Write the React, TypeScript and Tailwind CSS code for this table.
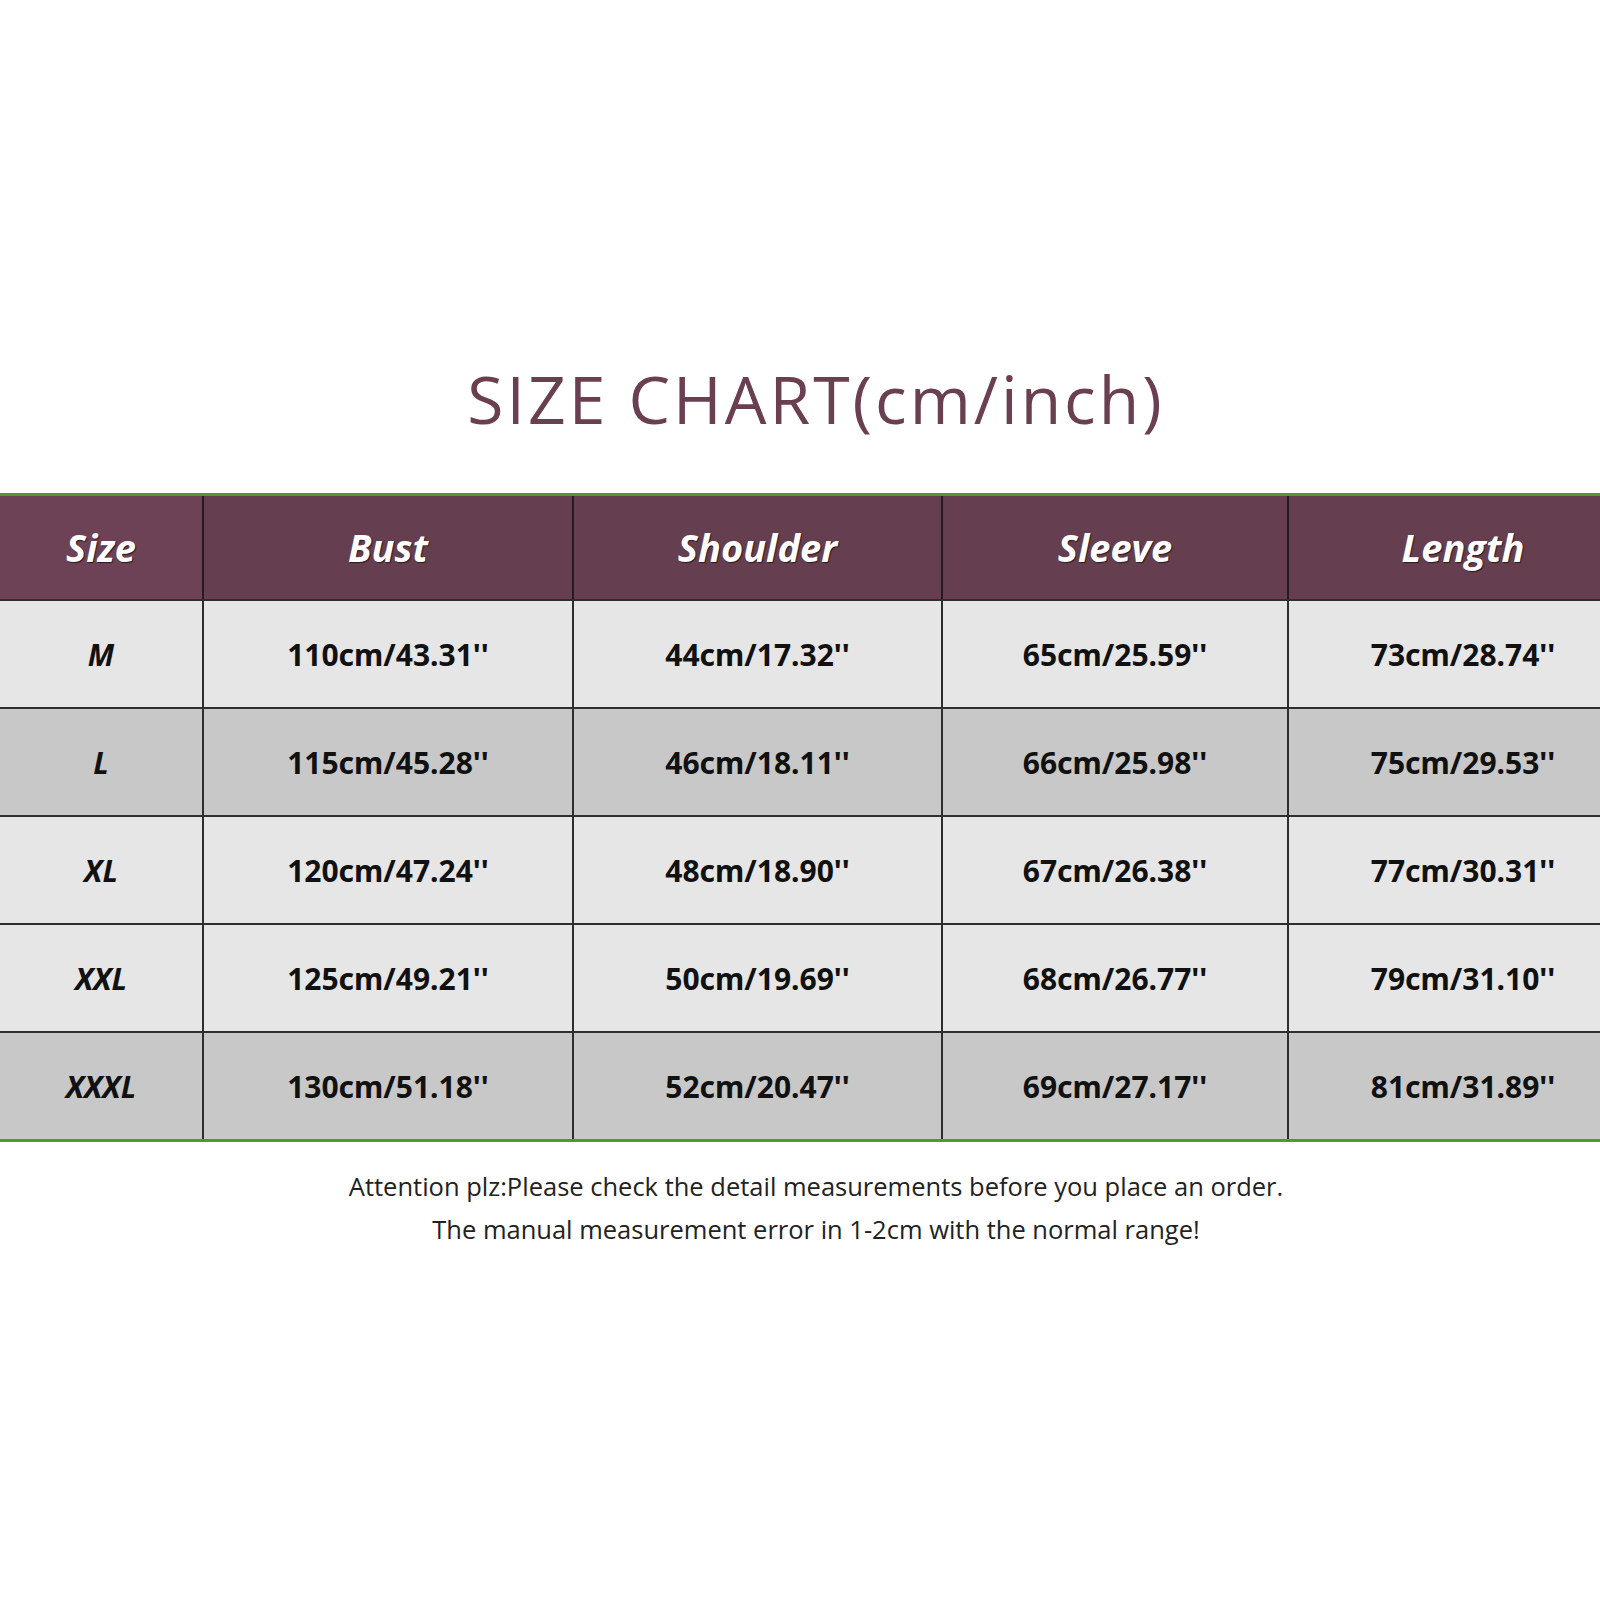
const columns = ["Size", "Bust", "Shoulder", "Sleeve", "Length"];

const rows = [
  ["M", "110cm/43.31''", "44cm/17.32''", "65cm/25.59''", "73cm/28.74''"],
  ["L", "115cm/45.28''", "46cm/18.11''", "66cm/25.98''", "75cm/29.53''"],
  ["XL", "120cm/47.24''", "48cm/18.90''", "67cm/26.38''", "77cm/30.31''"],
  ["XXL", "125cm/49.21''", "50cm/19.69''", "68cm/26.77''", "79cm/31.10''"],
  ["XXXL", "130cm/51.18''", "52cm/20.47''", "69cm/27.17''", "81cm/31.89''"],
];

// shading in the chart isn't strictly alternating
const dark = [false, true, false, false, true];

const grid = "grid grid-cols-[202px_370px_369px_346px_350px]";

export default function App() {
  return (
    <div className="w-[1600px] h-[1600px] bg-white overflow-hidden">
      <h1 className="pt-[358px] pl-[32px] h-[493px] text-center text-[66px] leading-[80px] font-medium text-[#6a4050] font-['Open_Sans',sans-serif] tracking-[3px]">
        SIZE CHART(cm/inch)
      </h1>

      <div className="border-y-[3px] border-[#4f9a2e] w-[1637px]">
        <div className={`${grid} h-[103px] bg-[#653f50]`}>
          {columns.map((c, i) => (
            <div
              key={c}
              className={`flex items-center justify-center text-white italic font-bold text-[38px] font-['Open_Sans',sans-serif] [text-shadow:1px_1px_1px_#2a1a20] ${i > 0 ? "border-l-2 border-[#231b1f]" : "bg-[#6e4256]"}`}
            >
              {c}
            </div>
          ))}
        </div>

        {rows.map((r, ri) => (
          <div
            key={r[0]}
            className={`${grid} h-[108px] border-t-2 border-[#2e2e2e] ${dark[ri] ? "bg-[#c8c8c8]" : "bg-[#e6e6e6]"}`}
          >
            {r.map((v, i) => (
              <div
                key={i}
                className={`flex items-center justify-center text-[#111] font-bold text-[30px] font-['Noto_Sans',sans-serif] ${i > 0 ? "border-l-2 border-[#2e2e2e]" : "italic"}`}
              >
                {v}
              </div>
            ))}
          </div>
        ))}
      </div>

      <div className="pt-[23px] pl-[32px] text-center text-[25.5px] leading-[43px] text-[#222] font-['Open_Sans',sans-serif]">
        <p>Attention plz:Please check the detail measurements before you place an order.</p>
        <p>The manual measurement error in 1-2cm with the normal range!</p>
      </div>
    </div>
  );
}
